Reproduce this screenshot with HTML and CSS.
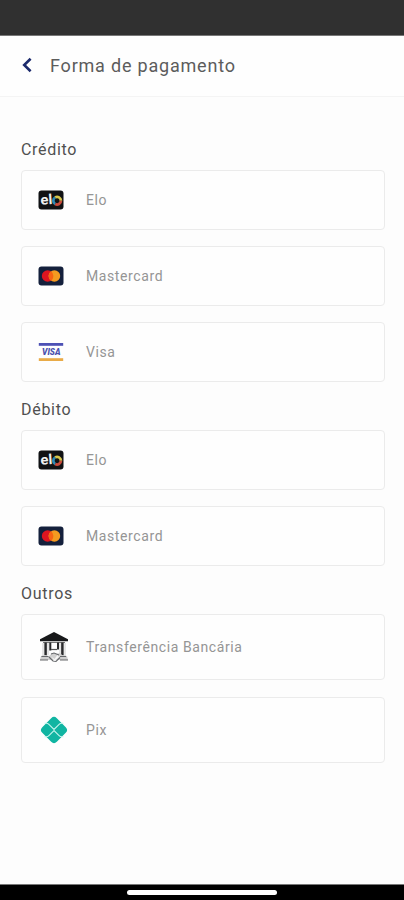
FILE: index.html
```html
<!DOCTYPE html>
<html lang="pt-BR">
<head>
<meta charset="utf-8">
<title>Forma de pagamento</title>
<link rel="stylesheet" href="styles.css">
</head>
<body>
<svg class="defs" aria-hidden="true">
  <symbol id="elo" viewBox="0 0 26 20">
    <rect x=".5" y=".5" width="25" height="19" rx="3" fill="#111214"/>
    <text x="2.6" y="14.4" class="elo-text" textLength="11.8" lengthAdjust="spacingAndGlyphs" transform="rotate(-4 8 12)">el</text>
    <g fill="none" stroke-width="2.8">
      <path d="M17.2 14A3.8 3.8 0 0 1 17.2 7.4" stroke="#2e8bb5"/>
      <path d="M17.2 7.4A3.8 3.8 0 0 1 22.9 10.7" stroke="#d8c64a"/>
      <path d="M22.9 10.7A3.8 3.8 0 0 1 17.2 14" stroke="#c94a3b"/>
    </g>
  </symbol>
  <symbol id="mastercard" viewBox="0 0 26 20">
    <rect x=".5" y=".5" width="25" height="19" rx="3" fill="#14203c"/>
    <circle cx="9.6" cy="10" r="5.8" fill="#df1520"/>
    <circle cx="16.4" cy="10" r="5.8" fill="#f59b20"/>
    <path d="M13 5.3a5.8 5.8 0 0 1 0 9.4 5.8 5.8 0 0 1 0-9.4" fill="#f76413"/>
  </symbol>
</svg>
<div class="status-bar"></div>
<header class="header">
  <svg class="back" viewBox="0 0 10 16"><path d="M8.6 1.7 2.2 8l6.4 6.3" fill="none" stroke="#1c2a6c" stroke-width="2.6"/></svg>
  <h1>Forma de pagamento</h1>
</header>
<main class="content">
  <section>
    <h2>Crédito</h2>
    <div class="cards">
      <div class="card"><svg class="brand"><use href="#elo"/></svg><span>Elo</span></div>
      <div class="card"><svg class="brand"><use href="#mastercard"/></svg><span>Mastercard</span></div>
      <div class="card"><svg class="brand" viewBox="0 0 26 20">
        <path d="M.8 1h24.4v2.8H.8z" fill="#4d51b5"/>
        <path d="M.8 16.2h24.4V19H.8z" fill="#e9ab48"/>
        <text x="4" y="13.4" class="visa-text" textLength="18.5" lengthAdjust="spacingAndGlyphs">VISA</text>
      </svg><span>Visa</span></div>
    </div>
  </section>
  <section>
    <h2>Débito</h2>
    <div class="cards">
      <div class="card"><svg class="brand"><use href="#elo"/></svg><span>Elo</span></div>
      <div class="card"><svg class="brand"><use href="#mastercard"/></svg><span>Mastercard</span></div>
    </div>
  </section>
  <section>
    <h2>Outros</h2>
    <div class="cards others">
      <div class="card tall"><svg class="method" viewBox="0 0 30 32">
        <path d="M15 1 29 8.3v2H1v-2z" fill="#17181a"/>
        <path d="M4 11.5h22" stroke="#777" stroke-width="1"/>
        <g stroke="#292a2c" stroke-width="2.5">
          <path d="M6.6 11.5v13M23.4 11.5v13"/>
          <path d="M11.3 11.5v8M19 11.5v7" stroke-width="2"/>
        </g>
        <path d="M4 12v13M9 12v12M21 12v12M26 12v13" stroke="#c2c2c2" stroke-width=".8"/>
        <path d="M12 18.5h6" stroke="#555" stroke-width="1.2"/>
        <path d="m2 25 4-1 4 1 3-3 4 1 4-1 2 2 5 1 1 4H1z" fill="#d0d0d0"/>
        <path d="M2.5 25.5h7M1 29h8M21 25.5h6M21 29h8M12 23l3-1 5 2M10 26l4 4 3 .5 4-4" fill="none" stroke="#66686b" stroke-width="1.1"/>
        <path d="m12 25.5 3.5 2.5 3-4 1.5 2-4.5 4z" fill="#f5f5f5"/>
      </svg><span>Transferência Bancária</span></div>
      <div class="card tall"><svg class="method" viewBox="0 0 30 32">
        <rect x="4.7" y="5.7" width="20.6" height="20.6" rx="4" transform="rotate(45 15 16)" fill="#10b5a2"/>
        <path d="M5.5 9.2h1.8c1 0 1.9.4 2.6 1.1L15 15.4l5.1-5.1c.7-.7 1.6-1.1 2.6-1.1h1.8M5.5 22.8h1.8c1 0 1.9-.4 2.6-1.1l5.1-5.1 5.1 5.1c.7.7 1.6 1.1 2.6 1.1h1.8" fill="none" stroke="#c4f4ec" stroke-width="1.1"/>
      </svg><span>Pix</span></div>
    </div>
  </section>
</main>
<footer class="nav-bar"><div class="handle"></div></footer>
</body>
</html>
```
FILE: styles.css
```css
* { box-sizing: border-box; }
body {
  margin: 0;
  height: 900px;
  display: flex;
  flex-direction: column;
  overflow: hidden;
  background: #fdfdfd;
  font-family: Roboto, sans-serif;
}
.defs { display: none; }
.status-bar {
  height: 36px;
  background: #303030;
  border-bottom: 1px solid #777;
}
.header {
  height: 61px;
  display: flex;
  align-items: center;
  padding: 0 0 2px 22px;
  background: #fefefe;
  border-bottom: 1px solid #f4f4f4;
}
.back { width: 10px; height: 16px; margin-right: 18px; }
h1, h2 { margin: 0; font-weight: 400; white-space: nowrap; }
h1 { padding-top: 1px; font-size: 18px; line-height: 24px; color: #5c5c5c; letter-spacing: .8px; }
.content {
  flex: 1;
  display: flex;
  flex-direction: column;
  gap: 18px;
  padding: 43px 19px 0 21px;
}
h2 { font-size: 16px; line-height: 20px; color: #505050; letter-spacing: .7px; }
.cards { display: flex; flex-direction: column; gap: 16px; padding-top: 10px; }
.others { gap: 17px; }
.card {
  height: 60px;
  display: flex;
  align-items: center;
  padding: 0 15px 1px;
  background: #fefefe;
  border: 1px solid #ebebeb;
  border-radius: 4px;
}
.card.tall { height: 66px; }
.card span { font-size: 14px; line-height: 20px; color: #959595; letter-spacing: .6px; white-space: nowrap; }
.brand { width: 26px; height: 20px; margin: 0 22px 0 1px; }
.method { width: 30px; height: 32px; margin: 0 17px 0 2px; }
.elo-text { font: 700 14px Roboto, sans-serif; fill: #f0f0f0; }
.visa-text { font: italic 900 9.5px Roboto, sans-serif; fill: #4b50ad; }
.nav-bar {
  height: 16px;
  display: flex;
  justify-content: center;
  padding-top: 5px;
  background: #000;
  border-top: 1px solid #777;
}
.handle { width: 150px; height: 5px; border-radius: 3px; background: #fff; }
```
